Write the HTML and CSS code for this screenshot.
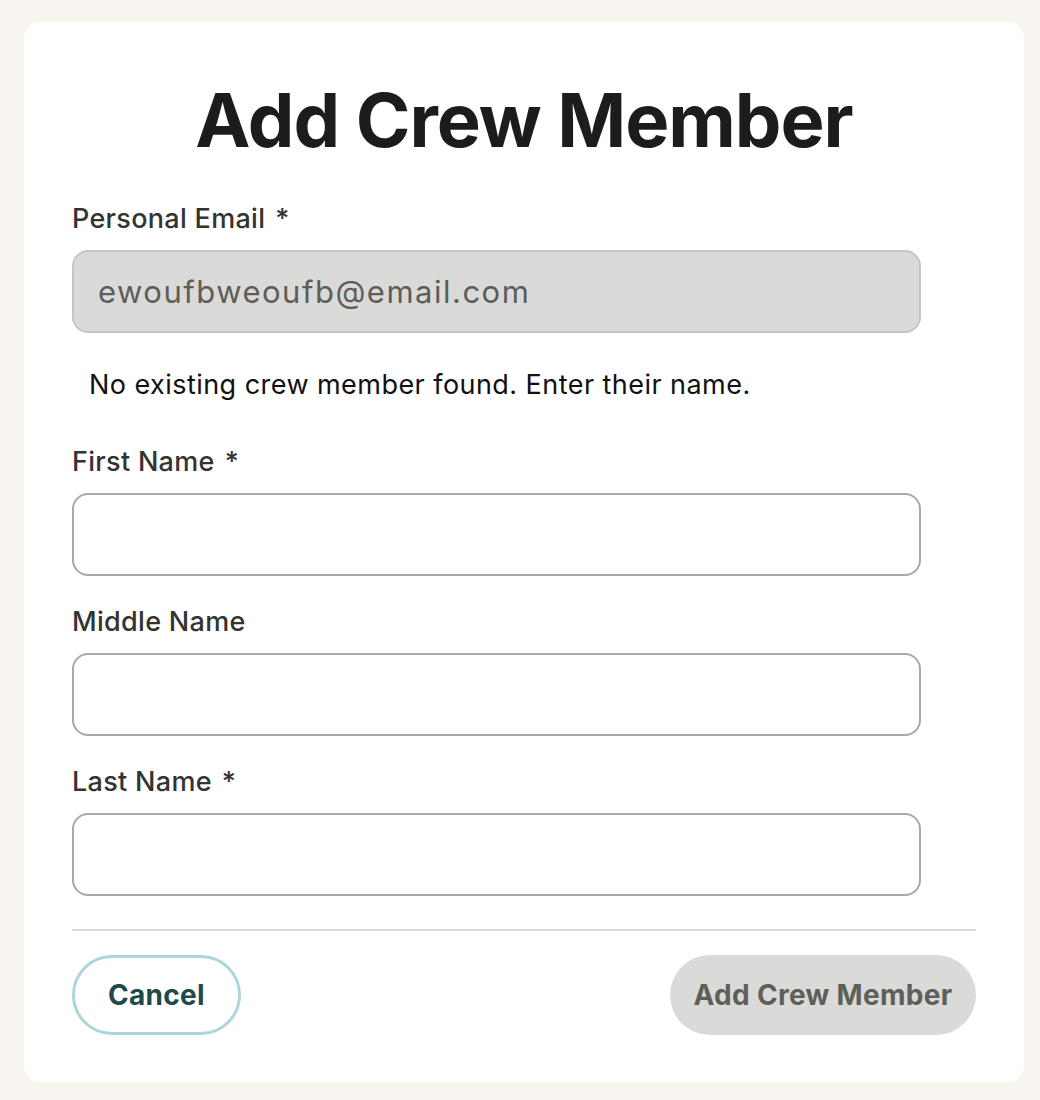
FILE: index.html
```html
<!DOCTYPE html>
<html lang="en">
<head>
<meta charset="utf-8">
<title>Add Crew Member</title>
<link rel="stylesheet" href="styles.css">
</head>
<body>
<div class="card">
  <h1 class="title">Add Crew Member</h1>
  <form class="form">
    <div class="field">
      <label class="label">Personal Email<span class="req">*</span></label>
      <div class="input input-disabled">ewoufbweoufb@email.com</div>
    </div>
    <p class="message">No existing crew member found. Enter their name.</p>
    <div class="field field-first">
      <label class="label">First Name<span class="req">*</span></label>
      <div class="input"></div>
    </div>
    <div class="field field-next">
      <label class="label">Middle Name</label>
      <div class="input"></div>
    </div>
    <div class="field field-next">
      <label class="label">Last Name<span class="req">*</span></label>
      <div class="input"></div>
    </div>
    <div class="divider"></div>
    <div class="actions">
      <button type="button" class="btn btn-cancel">Cancel</button>
      <button type="button" class="btn btn-submit">Add Crew Member</button>
    </div>
  </form>
</div>
</body>
</html>
```
FILE: styles.css
```css
* { box-sizing: border-box; }
html, body { margin: 0; }
body {
  background: #f8f5f0;
  padding: 22px 16px 18px 24px;
  font-family: "Inter", "Noto Sans", sans-serif;
}
.card {
  background: #ffffff;
  border-radius: 16px;
  padding: 52px 48px 47px 48px;
}
.title {
  margin: 0;
  text-align: center;
  font-size: 74px;
  line-height: 92px;
  font-weight: 700;
  color: #1c1c1a;
  letter-spacing: -1px;
}
.form {
  display: flex;
  flex-direction: column;
  margin-top: 37px;
}
.field {
  display: flex;
  flex-direction: column;
  gap: 15px;
  width: 849px;
}
.field-first { margin-top: 45px; }
.field-next { margin-top: 30px; }
.label {
  font-size: 27px;
  line-height: 32px;
  font-weight: 500;
  color: #333331;
  letter-spacing: 0.3px;
}
.req { margin-left: 10px; }
.input {
  height: 83px;
  border: 2px solid #a9a9a5;
  border-radius: 16px;
  background: #ffffff;
  padding: 0 24px;
  display: flex;
  align-items: center;
  font-size: 31px;
  letter-spacing: 1.5px;
  color: #5d5d5a;
}
.input-disabled {
  background: #dadad8;
  border-color: #c5c5c3;
}
.message {
  margin: 36px 0 0 17px;
  font-size: 27px;
  line-height: 32px;
  letter-spacing: 0.45px;
  color: #111111;
}
.divider {
  margin-top: 33px;
  border-top: 2px solid #dcdcdc;
}
.actions {
  margin-top: 24px;
  display: flex;
  justify-content: space-between;
  align-items: center;
}
.btn {
  height: 80px;
  border-radius: 40px;
  font-family: inherit;
  font-size: 28px;
  letter-spacing: 0.3px;
  font-weight: 700;
  cursor: pointer;
}
.btn-cancel {
  width: 169px;
  background: #ffffff;
  border: 3px solid #acd6d9;
  color: #1e4a4b;
}
.btn-submit {
  width: 306px;
  background: #dadad8;
  border: none;
  color: #5f5f5a;
}
```
